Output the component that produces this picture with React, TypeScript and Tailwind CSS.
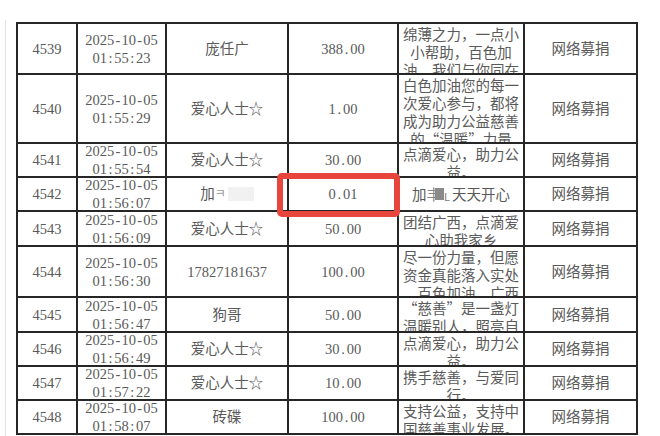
import type { ReactNode } from 'react'

interface Row {
  id: string
  date: string
  time: string
  name: ReactNode
  amount: string
  note: string[] | ReactNode
  h: number
}

const SERIF = { fontFamily: '"Liberation Serif", "Noto Sans CJK SC", serif' }

// half-width monospace look of the scanned table (every ascii char is 0.5em)
function Mono({ text }: { text: string }) {
  return (
    <span className="whitespace-nowrap">
      {text.split('').map((c, i) => (
        <span key={i} className="inline-block w-[0.5em] text-center">{c}</span>
      ))}
    </span>
  )
}

const blurName = (
  <span className="inline-flex items-center">
    加<span className="text-[#999] text-[12px]">ㅋ</span>
    <span className="inline-block w-[26px] h-[14px] bg-[#f1f1f1] ml-[2px]" />
  </span>
)

const blurNote = (
  <span className="inline-flex items-center">
    加<span className="text-[#888]">丰</span>
    <span className="inline-block w-[9px] h-[12px] bg-[#8a8a8a] -ml-[6px]" />
    <span className="text-[#777] text-[11px] mt-[3px]">L</span>
    <span className="inline-block w-[2px]" />天天开心
  </span>
)

// notes are split the way the scan wraps them
const rows: Row[] = [
  { id: '4539', date: '2025-10-05', time: '01:55:23', name: '庞任广', amount: '388.00', note: ['绵薄之力，一点小', '小帮助，百色加', '油，我们与你同在'], h: 51 },
  { id: '4540', date: '2025-10-05', time: '01:55:29', name: '爱心人士☆', amount: '1.00', note: ['白色加油您的每一', '次爱心参与，都将', '成为助力公益慈善', '的“温暖”力量'], h: 69 },
  { id: '4541', date: '2025-10-05', time: '01:55:54', name: '爱心人士☆', amount: '30.00', note: ['点滴爱心，助力公', '益。'], h: 34 },
  { id: '4542', date: '2025-10-05', time: '01:56:07', name: blurName, amount: '0.01', note: blurNote, h: 34 },
  { id: '4543', date: '2025-10-05', time: '01:56:09', name: '爱心人士☆', amount: '50.00', note: ['团结广西，点滴爱', '心助我家乡'], h: 35 },
  { id: '4544', date: '2025-10-05', time: '01:56:30', name: <Mono text="17827181637" />, amount: '100.00', note: ['尽一份力量，但愿', '资金真能落入实处', '。百色加油，广西'], h: 51 },
  { id: '4545', date: '2025-10-05', time: '01:56:47', name: '狗哥', amount: '50.00', note: ['“慈善”是一盏灯', '温暖别人，照亮自'], h: 35 },
  { id: '4546', date: '2025-10-05', time: '01:56:49', name: '爱心人士☆', amount: '30.00', note: ['点滴爱心，助力公', '益。'], h: 34 },
  { id: '4547', date: '2025-10-05', time: '01:57:22', name: '爱心人士☆', amount: '10.00', note: ['携手慈善，与爱同', '行。'], h: 34 },
  { id: '4548', date: '2025-10-05', time: '01:58:07', name: '砖碟', amount: '100.00', note: ['支持公益，支持中', '国慈善事业发展。'], h: 34 },
]

const cell = 'border-r-2 border-b-2 border-[#262626] overflow-hidden flex items-center justify-center text-center'

export default function App() {
  return (
    <div className="w-[660px] h-[436px] bg-white overflow-hidden relative text-[14.5px] leading-[18px] text-[#5a5a5a]" style={SERIF}>
      <div className="absolute left-[5px] top-[20px] bottom-0 w-px bg-[#e4e4e4]" />
      <div className="ml-[16px] mt-[22px] w-[622px] border-l-2 border-t-2 border-[#262626] relative">
        {rows.map(r => {
          const lines = Array.isArray(r.note)
          return (
            <div key={r.id} className="grid grid-cols-[60px_89px_122px_110px_126px_113px]" style={{ height: r.h }}>
              <div className={cell}><Mono text={r.id} /></div>
              <div className={`${cell} flex-col`}>
                <Mono text={r.date} />
                <Mono text={r.time} />
              </div>
              <div className={cell}>{r.name}</div>
              <div className={cell}><Mono text={r.amount} /></div>
              <div className={`${cell} ${lines ? 'flex-col justify-start pt-px' : ''} font-['Noto_Sans_CJK_SC',sans-serif]`}>
                {lines
                  ? (r.note as string[]).map((l, i) => <div key={i} className="whitespace-nowrap shrink-0">{l}</div>)
                  : r.note}
              </div>
              <div className={cell}>网络募捐</div>
            </div>
          )
        })}
        {/* red highlight round the 0.01 amount */}
        <div className="absolute left-[259px] top-[149px] w-[123px] h-[44px] border-[6px] border-[#e8453c] rounded-[5px]" />
      </div>
    </div>
  )
}
